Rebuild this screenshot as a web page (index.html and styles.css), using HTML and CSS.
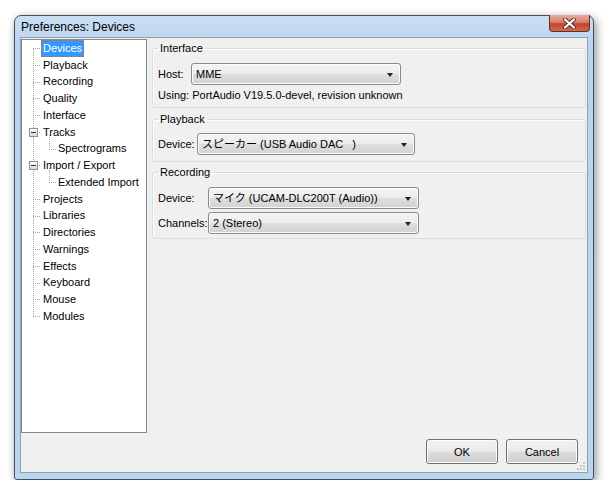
FILE: index.html
```html
<!DOCTYPE html>
<html lang="en">

<head>
    <title>Preferences: Devices</title>
    <link rel="stylesheet" href="styles.css">
</head>

<body>
    <div class="window">
        <div class="titlebar">
            <span class="title">Preferences: Devices</span>
            <div class="close">
                <svg width="13" height="11" viewBox="0 0 13 11">
                    <path d="M2 1.5 L11 9.5 M11 1.5 L2 9.5" stroke="#5a2a22" stroke-width="4" stroke-linecap="round"/>
                    <path d="M2 1.5 L11 9.5 M11 1.5 L2 9.5" stroke="#fff" stroke-width="2.2" stroke-linecap="round"/>
                </svg>
            </div>
        </div>
        <div class="client">
            <div class="main">
                <div class="tree">
                    <div class="vline"></div>
                    <div class="row root"><span class="label selected">Devices</span></div>
                    <div class="row root"><span class="label">Playback</span></div>
                    <div class="row root"><span class="label">Recording</span></div>
                    <div class="row root"><span class="label">Quality</span></div>
                    <div class="row root"><span class="label">Interface</span></div>
                    <div class="row root open"><span class="label">Tracks</span></div>
                    <div class="row child"><span class="label">Spectrograms</span></div>
                    <div class="row root open"><span class="label">Import / Export</span></div>
                    <div class="row child"><span class="label">Extended Import</span></div>
                    <div class="row root"><span class="label">Projects</span></div>
                    <div class="row root"><span class="label">Libraries</span></div>
                    <div class="row root"><span class="label">Directories</span></div>
                    <div class="row root"><span class="label">Warnings</span></div>
                    <div class="row root"><span class="label">Effects</span></div>
                    <div class="row root"><span class="label">Keyboard</span></div>
                    <div class="row root"><span class="label">Mouse</span></div>
                    <div class="row root"><span class="label">Modules</span></div>
                </div>
                <div class="panel">
                    <fieldset class="group interface">
                        <legend>Interface</legend>
                        <div class="field first">
                            <span class="name host">Host:</span>
                            <div class="combo w-host">MME<i class="arrow"></i></div>
                        </div>
                        <div class="note">Using: PortAudio V19.5.0-devel, revision unknown</div>
                    </fieldset>
                    <fieldset class="group playback">
                        <legend>Playback</legend>
                        <div class="field first">
                            <span class="name play">Device:</span>
                            <div class="combo w-play">スピーカー (USB Audio DAC&nbsp;&nbsp;&nbsp;)<i class="arrow"></i></div>
                        </div>
                    </fieldset>
                    <fieldset class="group recording">
                        <legend>Recording</legend>
                        <div class="field first">
                            <span class="name rec">Device:</span>
                            <div class="combo w-rec">マイク (UCAM-DLC200T (Audio))<i class="arrow"></i></div>
                        </div>
                        <div class="field">
                            <span class="name rec">Channels:</span>
                            <div class="combo w-rec">2 (Stereo)<i class="arrow"></i></div>
                        </div>
                    </fieldset>
                </div>
            </div>
            <div class="buttons">
                <button>OK</button>
                <button>Cancel</button>
            </div>
            <svg class="grip" width="10" height="10" viewBox="0 0 10 10">
                <rect x="7" y="1" width="2" height="2" fill="#c4c4c4"/>
                <rect x="4" y="4" width="2" height="2" fill="#c4c4c4"/>
                <rect x="7" y="4" width="2" height="2" fill="#c4c4c4"/>
                <rect x="1" y="7" width="2" height="2" fill="#c4c4c4"/>
                <rect x="4" y="7" width="2" height="2" fill="#c4c4c4"/>
                <rect x="7" y="7" width="2" height="2" fill="#c4c4c4"/>
            </svg>
        </div>
    </div>
</body>

</html>
```

FILE: styles.css
```css
body {
    margin: 0;
    background-color: #ffffff;
    font-family: "Liberation Sans", "Noto Sans CJK JP", sans-serif;
    font-size: 11px;
    color: #000;
}

div.window {
    position: relative;
    box-sizing: border-box;
    width: 580px;
    height: 465px;
    margin: 15px 0 0 14px;
    padding: 0 5px 5px 5px;
    border: 1px solid #45505c;
    border-radius: 7px 7px 3px 3px;
    background: linear-gradient(180deg, #c9dff4 0%, #b9d3ee 30px, #bcd5ef 100%);
    box-shadow: 2px 3px 10px rgba(0, 0, 0, 0.45);
}

div.titlebar {
    height: 21px;
    display: flex;
    align-items: center;
    padding-left: 1px;
}

span.title {
    font-size: 12px;
    color: #000;
}

div.close {
    position: absolute;
    top: -1px;
    right: 3px;
    width: 41px;
    height: 17px;
    box-sizing: border-box;
    border: 1px solid #6b2d25;
    border-top: none;
    border-radius: 0 0 4px 4px;
    background: linear-gradient(180deg, #e8a99d 0%, #d9826f 45%, #c2432c 55%, #cf6a52 100%);
    display: flex;
    align-items: center;
    justify-content: center;
}

div.client {
    position: relative;
    box-sizing: border-box;
    height: 436px;
    border: 1px solid #8f9fb0;
    background-color: #f0f0f0;
    display: flex;
    flex-direction: column;
}

div.main {
    display: flex;
    flex-direction: row;
}

div.tree {
    position: relative;
    box-sizing: border-box;
    width: 126px;
    height: 394px;
    margin-top: 1px;
    border: 1px solid #828790;
    background-color: #fff;
}

div.vline {
    position: absolute;
    left: 11px;
    top: 8px;
    height: 268px;
    border-left: 1px dotted #a0a0a0;
}

div.row {
    position: relative;
    height: 16.75px;
    display: flex;
    align-items: center;
}

div.row .label {
    height: 17px;
    line-height: 17px;
    padding: 0 2px;
    box-sizing: border-box;
    white-space: nowrap;
}

div.root .label {
    margin-left: 19px;
}

div.child .label {
    margin-left: 34px;
}

div.root:before {
    content: "";
    position: absolute;
    left: 11px;
    top: 8px;
    width: 7px;
    border-top: 1px dotted #a0a0a0;
}

div.child:before {
    content: "";
    position: absolute;
    left: 27px;
    top: -6px;
    width: 6px;
    height: 14px;
    border-left: 1px dotted #a0a0a0;
    border-bottom: 1px dotted #a0a0a0;
}

div.open:after {
    content: "";
    position: absolute;
    left: 7px;
    top: 4px;
    width: 9px;
    height: 9px;
    box-sizing: border-box;
    border: 1px solid #919191;
    background: linear-gradient(#1e395b, #1e395b) center / 5px 1px no-repeat, linear-gradient(180deg, #ffffff, #d6d6d6);
}

span.selected {
    background-color: #3399ff;
    color: #fff;
    outline: 1px dotted #c07030;
    outline-offset: -1px;
}

div.panel {
    flex: 1;
    margin: 0 1px 0 5px;
}

fieldset.group {
    margin: 0;
    padding: 0 5px 3px 5px;
    border: 1px solid #d5dfe5;
    border-radius: 3px;
    box-shadow: inset 1px 1px 0 #fff;
}

fieldset.group legend {
    padding: 0 2px;
    line-height: 14px;
}

fieldset.interface {
    margin-top: 3px;
    padding-bottom: 5px;
}

fieldset.playback {
    margin-top: 4px;
    padding-bottom: 6px;
}

fieldset.recording {
    margin-top: 3px;
    padding-bottom: 4px;
}

div.field {
    display: flex;
    align-items: center;
    height: 22px;
    margin-top: 3px;
}

div.field.first {
    margin-top: 8px;
}

fieldset.playback div.field.first {
    margin-top: 7px;
}

span.name {
    flex-shrink: 0;
    white-space: nowrap;
}

span.name.host {
    width: 33px;
}

span.name.play {
    width: 39px;
}

span.name.rec {
    width: 50px;
}

div.combo {
    position: relative;
    box-sizing: border-box;
    height: 22px;
    line-height: 20px;
    padding-left: 4px;
    border: 1px solid #8a8a8a;
    border-radius: 3px;
    background: linear-gradient(180deg, #f4f4f4 0%, #ececec 48%, #dedede 52%, #d2d2d2 100%);
    box-shadow: inset 0 0 0 1px #fbfbfb;
    white-space: nowrap;
}

div.w-host {
    width: 210px;
}

div.w-play {
    width: 218px;
}

div.w-rec {
    width: 211px;
}

i.arrow {
    position: absolute;
    right: 7px;
    top: 9px;
    border-left: 3.5px solid transparent;
    border-right: 3.5px solid transparent;
    border-top: 4px solid #222;
}

div.note {
    line-height: 14px;
    margin-top: 3px;
}

div.buttons {
    display: flex;
    justify-content: flex-end;
    gap: 8px;
    margin-top: 6px;
    padding-right: 9px;
}

button {
    width: 72px;
    height: 25px;
    font-family: "Liberation Sans", sans-serif;
    font-size: 11px;
    color: #000;
    border: 1px solid #707070;
    border-radius: 3px;
    background: linear-gradient(180deg, #f2f2f2 0%, #ebebeb 48%, #dddddd 52%, #cfcfcf 100%);
    box-shadow: inset 0 0 0 1px #fcfcfc;
    padding: 0;
}

svg.grip {
    position: absolute;
    right: 1px;
    bottom: 1px;
}
```
